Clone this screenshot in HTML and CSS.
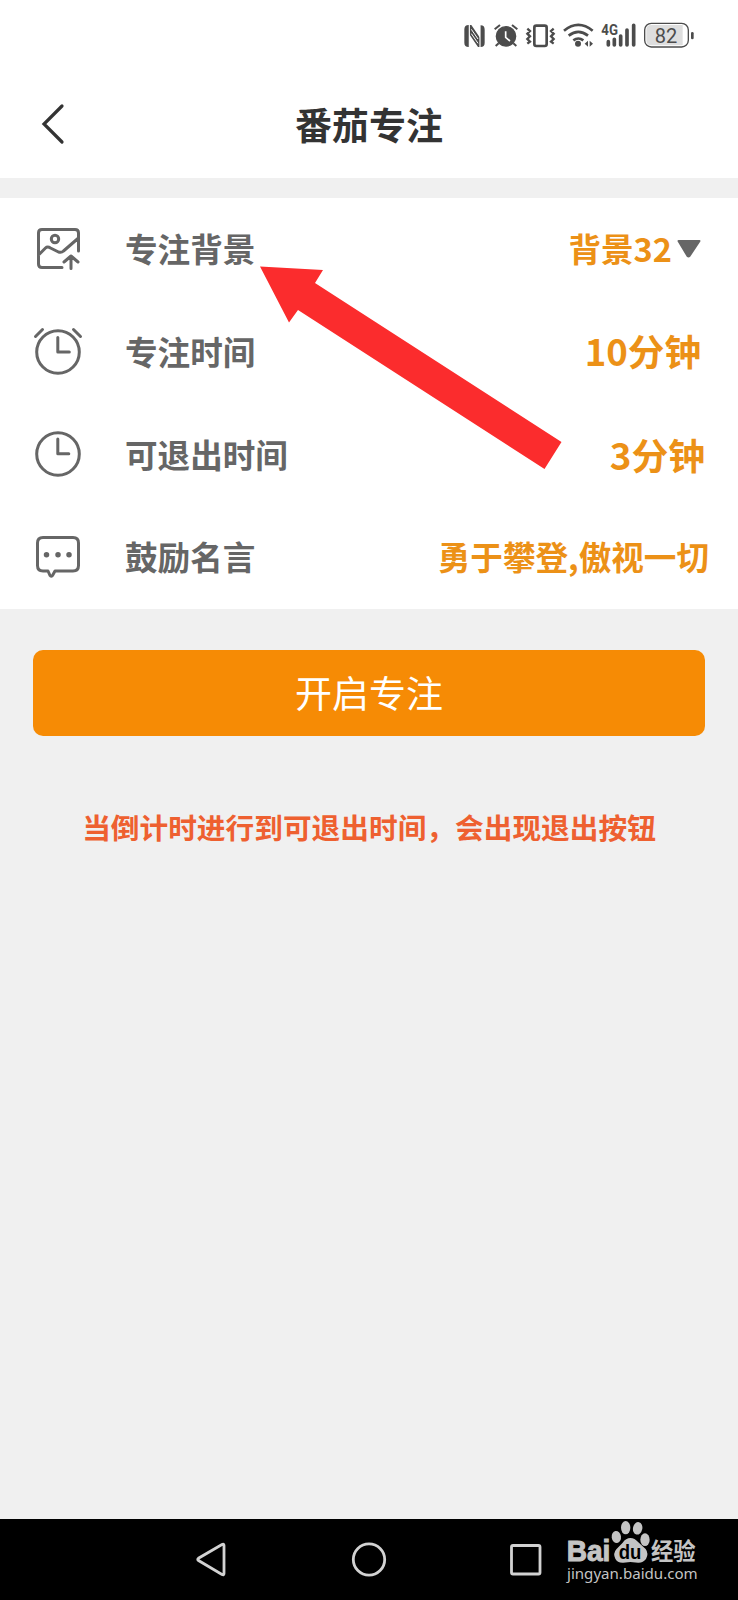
FILE: index.html
```html
<!DOCTYPE html>
<html lang="zh-CN">
<head>
<meta charset="utf-8">
<title>番茄专注</title>
<link rel="stylesheet" href="styles.css">
</head>
<body>
<div class="screen">
  <div class="status">
    <svg class="status-icons" width="260" height="50" viewBox="0 0 780 150" fill="none" stroke="#4c4c4c">
      <path d="M56 45h8l26 38V46h2q12 0 12 13v39q0 13-12 13h-8L58 73v38h-2q-13 0-13-13V58q0-13 13-13z" fill="#4c4c4c" stroke="none"/>
      <path d="M58 45v66M90 45v66" stroke="#fff" stroke-width="3.500"/>
      <path d="M64 58l20 29M64 71l20 29" stroke="#fff" stroke-width="3"/>
      <circle cx="168" cy="79" r="29" fill="#4c4c4c" stroke-width="4"/>
      <path d="M134 58l16-13M202 58l-16-13M146 100l-9 8M190 100l9 8" stroke-width="6"/>
      <path d="M167 64v18l13 11" stroke="#fff" stroke-width="5"/>
      <rect x="253" y="47" width="37" height="61" rx="6" stroke-width="8"/>
      <path d="M232 56l8 7-8 8 8 8-8 8 8 8-8 6M311 56l-8 7 8 8-8 8 8 8-8 8 8 6" stroke-width="7"/>
      <path d="M342 62q43-35 86 0M356 77q29-23 58 0M370 91q15-11 30 0" stroke-width="8"/>
      <circle cx="384" cy="101" r="9" fill="#4c4c4c" stroke="none"/>
      <path d="M404 101l10-9v18zM429 101l-10-9v18z" fill="#4c4c4c" stroke="none"/>
      <path d="M475 95v10M493 88v17M512 78v27M531 60v45M551 46v59" stroke-width="11" stroke-linecap="round"/>
      <text class="net" x="454" y="76" textLength="50" lengthAdjust="spacingAndGlyphs">4G</text>
      <rect x="584" y="40" width="131" height="71" rx="20" fill="#fff" stroke-width="4"/>
      <path d="M604 45h94v61h-94q-15 0-15-15V60q0-15 15-15z" fill="#dedede" stroke="none"/>
      <path d="M727 70v14" stroke-width="8" stroke-linecap="round"/>
      <text class="battery" x="614" y="98" textLength="68">82</text>
    </svg>
  </div>
  <header class="header">
    <svg class="back" width="24" height="42" viewBox="0 0 24 42"><path d="M21 3L3 21 21 39"/></svg>
    <h1 class="title">番茄专注</h1>
  </header>
  <main class="list">
    <div class="row">
      <svg class="icon" width="50" height="50" viewBox="0 0 50 50">
        <path d="M45.500 27V9Q45.500 5.500 42 5.500H9Q5.500 5.500 5.500 9v31q0 3.500 3.500 3.500h20M5.500 31l7-7q2-2 5 0l8 4q3 1 5-1l15-13M38 44.500V33M31 38l7-6 7 6"/>
        <circle cx="22" cy="15" r="3.700"/>
      </svg>
      <span class="label">专注背景</span>
      <span class="value value-bg">背景32</span>
      <svg class="caret" width="26" height="20" viewBox="0 0 26 20"><path d="M2.500 2h21L13.500 17q-1 1-2 0z"/></svg>
    </div>
    <div class="row">
      <svg class="icon" width="50" height="50" viewBox="0 0 50 50">
        <circle cx="25" cy="25" r="21.300"/>
        <path d="M24.800 10.500V25h11.500M2.500 9.500l7-7M47.500 9.500l-7-7"/>
      </svg>
      <span class="label">专注时间</span>
      <span class="value value-time">10分钟</span>
    </div>
    <div class="row">
      <svg class="icon" width="50" height="50" viewBox="0 0 50 50">
        <circle cx="25" cy="24" r="21.300"/>
        <path d="M24.800 9V23.800h11"/>
      </svg>
      <span class="label">可退出时间</span>
      <span class="value value-exit">3分钟</span>
    </div>
    <div class="row row-quote">
      <svg class="icon" width="50" height="50" viewBox="0 0 50 50">
        <path d="M10 4.500h30q5.500 0 5.500 5.500V32.500q0 5.500-5.500 5.500H22l-2.500 4.500q-1.500 1.500-2.500 0L15 38h-5q-5.500 0-5.500-5.500V10Q4.500 4.500 10 4.500z"/>
        <path class="dots" d="M13.500 21.700h.01M25 21.700h.01M36 21.700h.01"/>
      </svg>
      <span class="label">鼓励名言</span>
      <span class="value value-quote">勇于攀登,傲视一切</span>
    </div>
    <svg class="pointer" width="304" height="206" viewBox="0 0 304 206"><path d="M0 .5l63 3.500-8 13 246.500 159-17 27L38 44l-9 12.500z"/></svg>
  </main>
  <section class="actions">
    <button class="start">开启专注</button>
    <p class="note">当倒计时进行到可退出时间，会出现退出按钮</p>
  </section>
  <nav class="nav">
    <svg class="nav-icon" width="40" height="40" viewBox="0 0 40 40"><path d="M7.500 18.200Q6 19.500 7.500 20.500L31 34.500q2 1 2-1V5.500q0-2-2-1z"/></svg>
    <svg class="nav-icon" width="40" height="40" viewBox="0 0 40 40"><circle cx="21" cy="19.500" r="15.700"/></svg>
    <svg class="nav-icon" width="40" height="40" viewBox="0 0 40 40"><rect x="6.500" y="5.500" width="28.500" height="28.500" rx="1.500"/></svg>
    <svg class="watermark" width="150" height="80" viewBox="0 0 450 240">
      <text class="wm-brand" x="14" y="124" textLength="131" lengthAdjust="spacingAndGlyphs">Bai</text>
      <ellipse cx="163" cy="51" rx="14" ry="18" transform="rotate(-8 163 51)"/>
      <ellipse cx="191" cy="23" rx="14" ry="20"/>
      <ellipse cx="227" cy="25" rx="14" ry="19" transform="rotate(12 227 25)"/>
      <ellipse cx="249" cy="59" rx="14" ry="19"/>
      <path d="M205 54q13 0 24 13l22 20q10 14 1 30-9 12-24 11l-23-2-21 2q-18 1-24-12-8-15 3-28l19-20q10-14 23-14z"/>
      <text class="wm-du" x="170" y="116" textLength="68" lengthAdjust="spacingAndGlyphs">du</text>
      <text class="wm-cn" x="267" y="121" textLength="134" lengthAdjust="spacingAndGlyphs">经验</text>
      <text class="wm-url" x="15" y="176" textLength="392" lengthAdjust="spacingAndGlyphs">jingyan.baidu.com</text>
    </svg>
  </nav>
</div>
</body>
</html>
```
FILE: styles.css
```css
* { box-sizing: border-box; }
body {
  margin: 0;
  background: #f0f0f0;
  font-family: "Noto Sans CJK SC", sans-serif;
}
.screen {
  width: 738px;
  height: 1600px;
  display: flex;
  flex-direction: column;
  overflow: hidden;
}
.status {
  height: 70px;
  padding: 10px 28px 0 0;
  background: #fff;
  display: flex;
  justify-content: flex-end;
}
.net { font: 700 44px Roboto, sans-serif; fill: #4c4c4c; stroke: #fff; stroke-width: 4; paint-order: stroke; }
.battery { font: 60px Roboto, sans-serif; fill: #4c4c4c; stroke: none; }
.header {
  height: 108px;
  background: #fff;
  display: grid;
  grid-template-columns: 64px 1fr 64px;
  align-items: center;
  padding: 0 0 1px;
}
.back { margin-left: 41px; fill: none; stroke: #333; stroke-width: 3.2; stroke-linecap: round; }
.title {
  margin: 0;
  color: #333;
  font-size: 37px;
  line-height: 50px;
  font-weight: 700;
  text-align: center;
}
.list {
  position: relative;
  margin-top: 20px;
  height: 411px;
  background: #fff;
  display: grid;
  grid-template-rows: repeat(4, 1fr);
}
.row { display: flex; align-items: center; padding-left: 33px; }
.icon { fill: none; stroke: #666; stroke-width: 3; stroke-linecap: round; stroke-linejoin: round; }
.dots { stroke-width: 5.5; }
.label {
  margin-left: 42px;
  padding-bottom: 2px;
  color: #666;
  font-size: 32.6px;
  font-weight: 700;
  line-height: 48px;
}
.value {
  margin-left: auto;
  padding-bottom: 2px;
  color: #ec9117;
  font-size: 32.6px;
  font-weight: 700;
  line-height: 48px;
  white-space: nowrap;
}
.row-quote .label, .row-quote .value { padding-bottom: 4px; }
.value-time { font-size: 36.6px; margin-right: 37px; }
.value-exit { font-size: 36.8px; margin-right: 33px; }
.value-quote { margin-right: 29px; }
.caret { margin: 2px 36px 2px 4px; fill: #666; stroke: #666; stroke-width: 2; stroke-linejoin: round; }
.pointer { position: absolute; left: 260px; top: 68px; fill: #fb2c2d; }
.actions {
  flex: 1;
  padding: 41px 33px 0;
  display: flex;
  flex-direction: column;
  align-items: center;
}
.start {
  width: 100%;
  height: 86px;
  padding: 0 0 2px;
  border: 0;
  border-radius: 10px;
  background: #f68b05;
  color: #fff;
  font: 37px/50px "Noto Sans CJK SC", sans-serif;
}
.note {
  margin: 71px 0 0;
  color: #ee6030;
  font-size: 28.7px;
  font-weight: 700;
  line-height: 40px;
  white-space: nowrap;
}
.nav {
  position: relative;
  height: 81px;
  padding: 0 193px 0 191px;
  background: #000;
  display: flex;
  justify-content: space-between;
  align-items: center;
}
.nav-icon { fill: none; stroke: #d2d2d2; stroke-width: 2.8; }
.watermark { position: absolute; left: 562px; top: 1px; fill: #c4c4c4; }
.wm-brand { font: bold 87px "Liberation Sans", sans-serif; stroke: #c4c4c4; stroke-width: 3; }
.wm-du { font: bold 58px "Liberation Sans", sans-serif; fill: #000; }
.wm-cn { font: bold 70px "Noto Sans CJK SC", sans-serif; }
.wm-url { font: 43px "Noto Sans", sans-serif; }
```
